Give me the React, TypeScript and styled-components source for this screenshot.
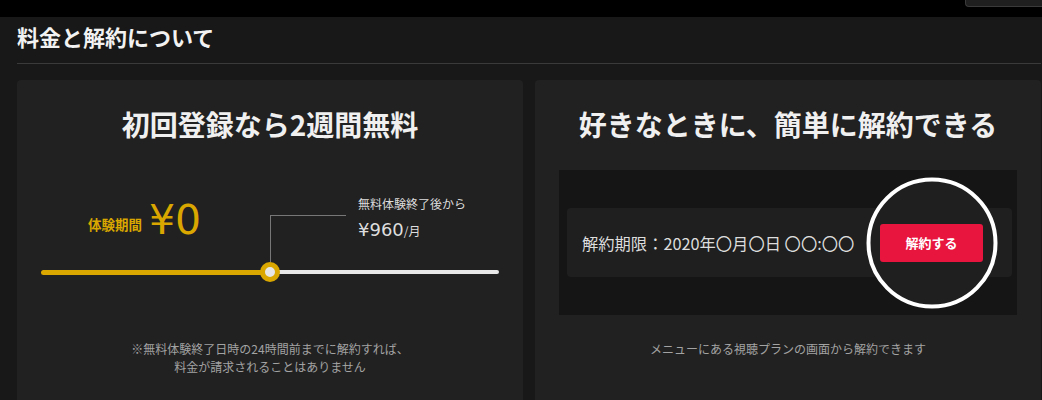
import React from 'react';
import styled, { createGlobalStyle } from 'styled-components';

const GlobalStyle = createGlobalStyle`
  html, body {
    margin: 0;
    padding: 0;
    background: #181818;
    font-family: "Noto Sans CJK JP", "Noto Sans", sans-serif;
    color: #eee;
  }
`;

const YELLOW = '#d9a700';

const TopBar = styled.div`
  height: 17px;
  background: #000;
  display: flex;
  justify-content: flex-end;
`;

const TopTab = styled.div`
  width: 76px;
  height: 6px;
  background: #1f1f1f;
  border: 1px solid #3a3a3a;
  border-top: none;
  border-right: none;
  border-radius: 0 0 0 4px;
`;

const Section = styled.section`
  padding: 0 1px 0 17px;
`;

const SectionTitle = styled.h2`
  margin: 0;
  padding-top: 5px;
  font-size: 22px;
  line-height: 28px;
  font-weight: 700;
  color: #f2f2f2;
`;

const Divider = styled.hr`
  margin: 13px 0 16px;
  border: none;
  border-top: 1px solid #3a3a3a;
`;

const Cards = styled.div`
  display: grid;
  grid-template-columns: 506px 506px;
  gap: 12px;
`;

const Card = styled.div`
  background: #212121;
  border-radius: 4px;
  height: 340px;
  padding: 24px 24px 0;
  box-sizing: border-box;
`;

const CardTitle = styled.h3`
  margin: 0;
  text-align: center;
  font-size: 28px;
  line-height: 40px;
  font-weight: 700;
  color: #f0f0f0;
`;

const Chart = styled.div`
  margin-top: 52px;
`;

const PriceRow = styled.div`
  display: grid;
  grid-template-columns: 229px 1fr;
  height: 66px;
`;

const FreePrice = styled.div`
  display: flex;
  align-items: flex-end;
  padding: 4px 0 0 47px;
  height: 45px;
  box-sizing: border-box;
  color: ${YELLOW};
`;

const FreeLabel = styled.span`
  font-size: 13.5px;
  font-weight: 700;
  line-height: 1;
  margin: 0 7px 10px 0;
`;

const FreeAmount = styled.span`
  font-family: "DejaVu Sans", "Noto Sans", sans-serif;
  font-size: 41px;
  line-height: 1;
`;

const PaidSide = styled.div`
  display: flex;
`;

const Connector = styled.div`
  width: 75px;
  margin-top: 19px;
  border-left: 1px solid #777;
  border-top: 1px solid #777;
`;

const PaidText = styled.div`
  margin-left: 12px;
  color: #ddd;
`;

const PaidLabel = styled.div`
  font-size: 12px;
  line-height: 16px;
`;

const PaidAmount = styled.div`
  margin-top: 9px;
  font-family: "DejaVu Sans", "Noto Sans", sans-serif;
  font-size: 18px;
  line-height: 1;
  small {
    font-family: "Noto Sans CJK JP", sans-serif;
    font-size: 12px;
  }
`;

const TrackWrap = styled.div`
  position: relative;
  height: 20px;
  display: flex;
  align-items: center;
`;

const Track = styled.div<{ $color: string; $height: number; $grow: number }>`
  flex: ${(p) => p.$grow};
  height: ${(p) => p.$height}px;
  background: ${(p) => p.$color};
  border-radius: 3px;
`;

const Thumb = styled.div`
  position: absolute;
  left: 50%;
  top: 50%;
  width: 10px;
  height: 10px;
  transform: translate(-50%, -50%);
  background: #e6e6e6;
  border: 5px solid ${YELLOW};
  border-radius: 50%;
`;

const Note = styled.p<{ $gap: number }>`
  margin: ${(p) => p.$gap}px 0 0;
  text-align: center;
  font-size: 12px;
  line-height: 18px;
  color: #a3a3a3;
`;

const Demo = styled.div`
  margin-top: 26px;
  background: #151515;
  padding: 38px 5px 38px 8px;
`;

const DeadlineRow = styled.div`
  display: flex;
  align-items: center;
  justify-content: space-between;
  height: 69px;
  padding: 0 29px 0 15px;
  background: #1f1f1f;
  border-radius: 4px;
`;

const Deadline = styled.span`
  font-size: 16.3px;
  color: #ddd;
`;

const ButtonSpot = styled.div`
  position: relative;
`;

const Spotlight = styled.div`
  position: absolute;
  left: 50%;
  top: 50%;
  width: 123px;
  height: 123px;
  transform: translate(-50%, -50%);
  border: 4px solid #fff;
  border-radius: 50%;
  background: #1f1f1f;
`;

const CancelButton = styled.button`
  position: relative;
  width: 103px;
  height: 38px;
  border: none;
  border-radius: 3px;
  background: #e8163f;
  color: #fff;
  font-family: inherit;
  font-size: 13px;
  font-weight: 700;
`;

export default function App() {
  return (
    <>
      <GlobalStyle />
      <TopBar>
        <TopTab />
      </TopBar>
      <Section>
        <SectionTitle>料金と解約について</SectionTitle>
        <Divider />
        <Cards>
          <Card>
            <CardTitle>初回登録なら2週間無料</CardTitle>
            <Chart>
              <PriceRow>
                <FreePrice>
                  <FreeLabel>体験期間</FreeLabel>
                  <FreeAmount>¥0</FreeAmount>
                </FreePrice>
                <PaidSide>
                  <Connector />
                  <PaidText>
                    <PaidLabel>無料体験終了後から</PaidLabel>
                    <PaidAmount>
                      ¥960<small>/月</small>
                    </PaidAmount>
                  </PaidText>
                </PaidSide>
              </PriceRow>
              <TrackWrap>
                <Track $color={YELLOW} $height={5} $grow={1} />
                <Track $color="#e8e8e8" $height={4} $grow={1} />
                <Thumb />
              </TrackWrap>
            </Chart>
            <Note $gap={58}>
              ※無料体験終了日時の24時間前までに解約すれば、
              <br />
              料金が請求されることはありません
            </Note>
          </Card>
          <Card>
            <CardTitle>好きなときに、簡単に解約できる</CardTitle>
            <Demo>
              <DeadlineRow>
                <Deadline>解約期限：2020年〇月〇日 〇〇:〇〇</Deadline>
                <ButtonSpot>
                  <Spotlight />
                  <CancelButton>解約する</CancelButton>
                </ButtonSpot>
              </DeadlineRow>
            </Demo>
            <Note $gap={25}>メニューにある視聴プランの画面から解約できます</Note>
          </Card>
        </Cards>
      </Section>
    </>
  );
}
